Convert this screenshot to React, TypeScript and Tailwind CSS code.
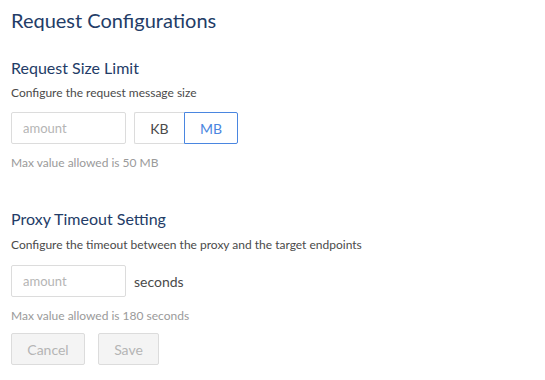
import React, { useState } from 'react';

export default function App() {
    const [unit, setUnit] = useState<'KB' | 'MB'>('MB');
    const [size, setSize] = useState('');
    const [timeout, setTimeoutValue] = useState('');

    return (
        <div className="min-h-[380px] bg-white px-[11px] pt-[6px] font-['Lato','Noto_Sans',sans-serif] text-[#4a4a4a]">
            <h1 className="text-[20px] leading-[28px] text-[#233c67]">Request Configurations</h1>

            <h2 className="mt-[23px] text-[16px] leading-[22px] text-[#233c67]">Request Size Limit</h2>
            <p className="mt-[6px] text-[12px] leading-[16px]">Configure the request message size</p>
            <div className="mt-[11px] flex items-center gap-2">
                <input
                    value={size}
                    onChange={(e) => setSize(e.target.value)}
                    placeholder="amount"
                    className="h-[32px] w-[115px] rounded-[2px] border border-[#dcdcdc] px-[11px] text-[13px] outline-none placeholder:text-[#b5b5b5]"
                />
                <div className="flex h-[32px]">
                    {(['KB', 'MB'] as const).map((u) => (
                        <button
                            key={u}
                            onClick={() => setUnit(u)}
                            className={
                                u === unit
                                    ? 'w-[54px] rounded-r-[2px] border border-[#4a86e0] text-[14px] text-[#4a86e0]'
                                    : 'w-[50px] rounded-l-[2px] border border-r-0 border-[#dcdcdc] text-[14px] text-[#4a4a4a]'
                            }
                        >
                            {u}
                        </button>
                    ))}
                </div>
            </div>
            <p className="mt-[11px] text-[12px] leading-[16px] text-[#9a9a9a]">Max value allowed is 50 MB</p>

            <h2 className="mt-[37px] text-[16px] leading-[22px] text-[#233c67]">Proxy Timeout Setting</h2>
            <p className="mt-[7px] text-[12px] leading-[16px]">Configure the timeout between the proxy and the target endpoints</p>
            <div className="mt-[12px] flex items-center gap-2">
                <input
                    value={timeout}
                    onChange={(e) => setTimeoutValue(e.target.value)}
                    placeholder="amount"
                    className="h-[32px] w-[115px] rounded-[2px] border border-[#dcdcdc] px-[11px] text-[13px] outline-none placeholder:text-[#b5b5b5]"
                />
                <span className="text-[14px]">seconds</span>
            </div>
            <p className="mt-[11px] text-[12px] leading-[16px] text-[#9a9a9a]">Max value allowed is 180 seconds</p>

            <div className="mt-[9px] flex gap-[13px]">
                <button disabled className="h-[32px] w-[74px] rounded-[2px] border border-[#dcdcdc] bg-[#f4f4f4] text-[14px] text-[#b5b5b5]">
                    Cancel
                </button>
                <button disabled className="h-[32px] w-[61px] rounded-[2px] border border-[#dcdcdc] bg-[#f4f4f4] text-[14px] text-[#b5b5b5]">
                    Save
                </button>
            </div>
        </div>
    );
}
